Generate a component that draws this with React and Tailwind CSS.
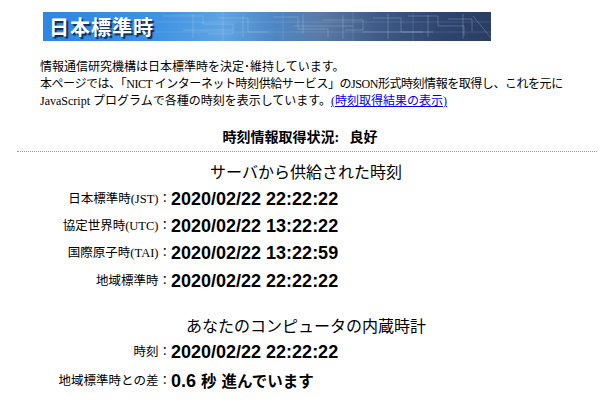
import React from "react";

const serif = { fontFamily: '"Liberation Serif", "Noto Sans CJK JP", serif' };

function Banner() {
  return (
    <div className="relative ml-[43px] h-[29px] w-[448px] overflow-hidden bg-[linear-gradient(90deg,#2f86e0_0%,#3d92e4_25%,#5fa4e2_40%,#4e86c4_52%,#5a7aa6_62%,#3e5a86_75%,#2f4670_88%,#2a3d62_100%)]">
      <svg className="absolute inset-0" width="448" height="29" viewBox="0 0 448 29">
        <g stroke="#b9d3f0" strokeOpacity="0.28" strokeWidth="1" fill="none">
          <path d="M120 4h40v8h30v10h-25M150 2v24M175 6h30v14h20M200 3v22M230 5h25v12h30v8M260 2v20M280 8h40v10h-18M300 3v24M330 6h28v14h22M345 2v25M365 4h30v10h26v10M385 3v22M405 7h24v12M420 2v25M430 4l18 22M250 14h60M320 20h70M140 18h50" />
        </g>
        <g stroke="#ffffff" strokeOpacity="0.12" strokeWidth="1">
          <path d="M110 10h338M110 20h338M180 0v29M240 0v29M310 0v29M370 0v29" />
        </g>
      </svg>
      <div
        className="relative flex h-full items-center pl-[6px] text-[20px] font-bold leading-none tracking-[1px] text-white [text-shadow:2px_2px_1px_#0b2a55]"
        style={{ fontFamily: '"Noto Sans CJK JP", sans-serif' }}
      >
        日本標準時
      </div>
    </div>
  );
}

function Row({ label, children, extra = "" }) {
  return (
    <div className={`flex h-[27px] items-center ${extra}`}>
      <div className="w-[171px] shrink-0 text-right text-[12.5px] text-black" style={serif}>
        {label}：
      </div>
      <div
        className="text-[18px] font-bold text-black"
        style={{ fontFamily: '"Liberation Sans", "Noto Sans CJK JP", sans-serif' }}
      >
        {children}
      </div>
    </div>
  );
}

export default function App() {
  return (
    <div className="h-[401px] w-[600px] overflow-hidden bg-white pt-[12px] text-black" style={serif}>
      <Banner />
      <div className="mt-[18px] pl-[40px] text-[12px] leading-[17px]">
        <div>情報通信研究機構は日本標準時を決定･維持しています。</div>
        <div className="tracking-[-0.45px]">本ページでは、「NICT インターネット時刻供給サービス」のJSON形式時刻情報を取得し、これを元に</div>
        <div>
          JavaScript プログラムで各種の時刻を表示しています。
          <a href="#" className="text-[#0000ee] underline">(時刻取得結果の表示)</a>
        </div>
      </div>
      <div className="mt-[18px] text-center text-[14px] font-bold leading-[20px]">
        時刻情報取得状況:&nbsp;&nbsp;&nbsp;良好
      </div>
      <div className="ml-[17px] mr-[3px] mt-[3px] border-t border-dotted border-[#9a9a9a]" />
      <div className="mt-[10px] pl-[12px] text-center text-[16px] leading-[22px]">サーバから供給された時刻</div>
      <div className="mt-[2px]">
        <Row label="日本標準時(JST)">2020/02/22 22:22:22</Row>
        <Row label="協定世界時(UTC)">2020/02/22 13:22:22</Row>
        <Row label="国際原子時(TAI)">2020/02/22 13:22:59</Row>
        <Row label="地域標準時" extra="mt-[1px]">2020/02/22 22:22:22</Row>
      </div>
      <div className="mt-[21px] pl-[12px] text-center text-[16px] leading-[22px]">あなたのコンピュータの内蔵時計</div>
      <Row label="時刻" extra="mt-[1px]">2020/02/22 22:22:22</Row>
      <Row label="地域標準時との差" extra="mt-[2px]">
        0.6 <span className="text-[15.5px]">秒</span> <span className="text-[15.5px]">進んでいます</span>
      </Row>
    </div>
  );
}
